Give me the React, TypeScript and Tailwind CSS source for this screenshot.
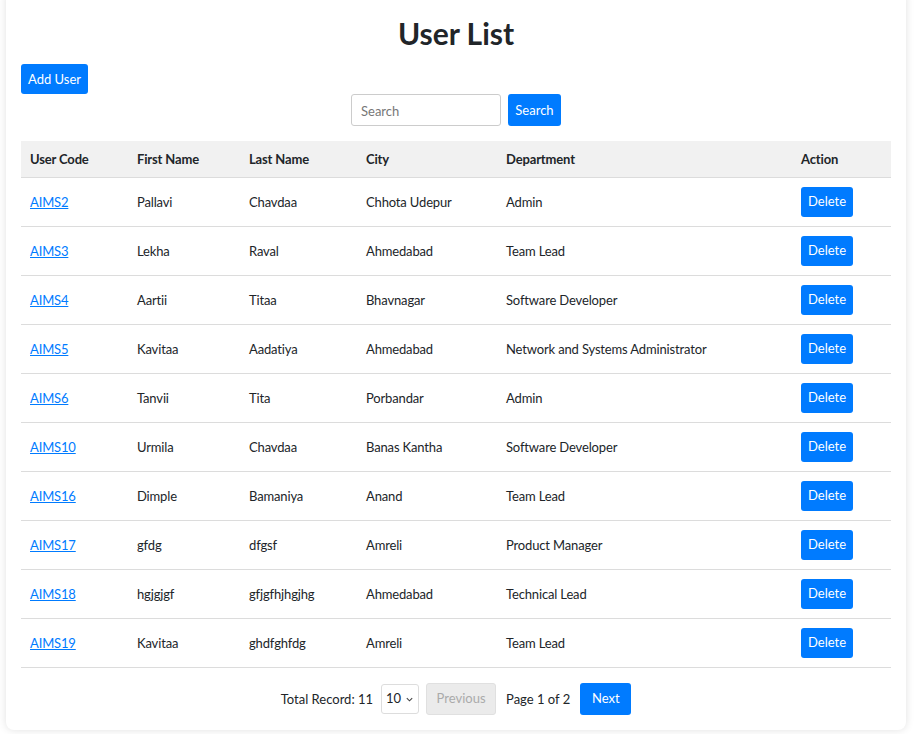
import React from "react";

const rows = [
  ["AIMS2", "Pallavi", "Chavdaa", "Chhota Udepur", "Admin"],
  ["AIMS3", "Lekha", "Raval", "Ahmedabad", "Team Lead"],
  ["AIMS4", "Aartii", "Titaa", "Bhavnagar", "Software Developer"],
  ["AIMS5", "Kavitaa", "Aadatiya", "Ahmedabad", "Network and Systems Administrator"],
  ["AIMS6", "Tanvii", "Tita", "Porbandar", "Admin"],
  ["AIMS10", "Urmila", "Chavdaa", "Banas Kantha", "Software Developer"],
  ["AIMS16", "Dimple", "Bamaniya", "Anand", "Team Lead"],
  ["AIMS17", "gfdg", "dfgsf", "Amreli", "Product Manager"],
  ["AIMS18", "hgjgjgf", "gfjgfhjhgjhg", "Ahmedabad", "Technical Lead"],
  ["AIMS19", "Kavitaa", "ghdfghfdg", "Amreli", "Team Lead"],
];

export default function App() {
  return (
    <div
      className="min-h-[734px] bg-white text-[#212529] overflow-hidden"
      style={{ fontFamily: 'Lato, "Noto Sans", sans-serif' }}
    >
      <div className="mx-[6px] -mt-[10px] w-[900px] rounded-lg bg-white px-[15px] pt-[25px] pb-[15px] shadow-[0_0_8px_rgba(0,0,0,0.12)]">
        <h1 className="text-center text-[30px] font-bold leading-[36px] text-[#212529]">
          User List
        </h1>
        <div className="mt-[13px]">
          <button className="h-[30px] w-[67px] rounded-[3px] bg-[#007bff] pt-[1px] text-[13px] text-white">
            Add User
          </button>
        </div>
        <div className="flex justify-center gap-[7px]">
          <input
            placeholder="Search"
            className="h-[32px] w-[150px] rounded-[3px] border border-[#ccc] px-[9px] pt-[1px] text-[13px] outline-none placeholder:text-[#777]"
          />
          <button className="h-[32px] w-[53px] rounded-[3px] bg-[#007bff] pt-[1px] text-[13px] text-white">
            Search
          </button>
        </div>
        <table className="mt-[15px] w-[870px] table-fixed border-collapse text-[13px] tracking-[-0.15px]">
          <colgroup>
            <col className="w-[107px]" />
            <col className="w-[112px]" />
            <col className="w-[117px]" />
            <col className="w-[140px]" />
            <col className="w-[295px]" />
            <col className="w-[99px]" />
          </colgroup>
          <thead>
            <tr className="h-[36px] border-b border-[#dcdcdc] bg-[#f1f1f1]">
              {["User Code", "First Name", "Last Name", "City", "Department", "Action"].map((h) => (
                <th key={h} className="px-[9px] pt-[2px] text-left font-bold">
                  {h}
                </th>
              ))}
            </tr>
          </thead>
          <tbody>
            {rows.map((r) => (
              <tr key={r[0]} className="h-[49px] border-b border-[#dcdcdc]">
                <td className="px-[9px] pt-[2px]">
                  <a href="#" className="text-[#007bff] underline">
                    {r[0]}
                  </a>
                </td>
                <td className="px-[9px] pt-[2px]">{r[1]}</td>
                <td className="px-[9px] pt-[2px]">{r[2]}</td>
                <td className="px-[9px] pt-[2px]">{r[3]}</td>
                <td className="px-[9px] pt-[2px]">{r[4]}</td>
                <td className="px-[9px]">
                  <button className="h-[30px] w-[52px] rounded-[3px] bg-[#007bff] pt-[1px] text-[13px] tracking-normal text-white">
                    Delete
                  </button>
                </td>
              </tr>
            ))}
          </tbody>
        </table>
        <div className="mt-[15px] flex items-center justify-center text-[13px]">
          <span className="mr-[8px] pt-[2px]">Total Record: 11</span>
          <div className="mr-[7px] flex h-[30px] w-[38px] items-center gap-[4px] rounded-[3px] border border-[#ddd] pl-[4px] pt-[1px]">
            <span>10</span>
            <svg width="9" height="9" viewBox="0 0 10 10" fill="none" stroke="#444" strokeWidth="1.2">
              <path d="M2 3.5 L5 6.5 L8 3.5" />
            </svg>
          </div>
          <button className="h-[32px] w-[70px] rounded-[3px] border border-[#e0e0e0] bg-[#ebebeb] pt-[1px] text-[13px] text-[#aaa]">
            Previous
          </button>
          <span className="mx-[10px] pt-[2px]">Page 1 of 2</span>
          <button className="h-[32px] w-[51px] rounded-[3px] bg-[#007bff] pt-[1px] text-[13px] text-white">
            Next
          </button>
        </div>
      </div>
    </div>
  );
}
